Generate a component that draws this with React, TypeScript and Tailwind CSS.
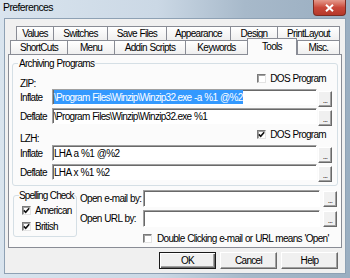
const rowOne = [
  { label: "Values", w: "w-[37px]" },
  { label: "Switches", w: "w-[54px]" },
  { label: "Save Files", w: "w-[59px]" },
  { label: "Appearance", w: "w-[64px]" },
  { label: "Design", w: "w-[47px]" },
  { label: "PrintLayout", w: "w-[63px]" },
];

const rowTwo = [
  { label: "ShortCuts", w: "w-[57px]" },
  { label: "Menu", w: "w-[47px]" },
  { label: "Addin Scripts", w: "w-[71px]" },
  { label: "Keywords", w: "w-[62px]" },
  { label: "Tools", w: "w-[50px]", active: true },
  { label: "Misc.", w: "w-[43px]" },
];

function Tab({ label, w, active, last }: { label: string; w: string; active?: boolean; last?: boolean }) {
  if (active) {
    return (
      <div
        className={`${w} relative z-10 -mb-px flex h-[17px] shrink-0 justify-center border border-b-0 border-[#898c95] bg-[#fbfbfb] pt-[2px] leading-[11px]`}
      >
        {label}
      </div>
    );
  }
  return (
    <div
      className={`${w} flex h-[14px] shrink-0 items-center justify-center whitespace-nowrap border-l border-t border-[#898c95] bg-gradient-to-b from-white to-[#efefef] leading-[11px] ${last ? "border-r" : ""}`}
    >
      {label}
    </div>
  );
}

function Check({ checked }: { checked?: boolean }) {
  return (
    <span className="flex h-[9px] w-[9px] shrink-0 items-center justify-center border border-b-[#e3e3e3] border-l-[#7a7a7a] border-r-[#e3e3e3] border-t-[#7a7a7a] bg-white shadow-[inset_1px_1px_0_#a0a0a0]">
      {checked && (
        <svg width="7" height="7" viewBox="0 0 7 7">
          <path d="M0.8 3.4 L2.7 5.3 L6.2 1.2" fill="none" stroke="#111" strokeWidth="1.6" />
        </svg>
      )}
    </span>
  );
}

function Field({ w, children }: { w: string; children?: React.ReactNode }) {
  return (
    <div
      className={`${w} flex h-full shrink-0 items-center overflow-hidden whitespace-nowrap border border-b-white border-l-[#a0a0a0] border-r-white border-t-[#a0a0a0] bg-white pl-[1px] shadow-[inset_1px_1px_0_#696969]`}
    >
      {children}
    </div>
  );
}

function Dots({ extra = "" }: { extra?: string }) {
  return (
    <div
      className={`flex h-[16px] w-[14px] shrink-0 items-end justify-center border border-b-[#696969] border-l-white border-r-[#696969] border-t-white bg-[#f0f0f0] pb-[2px] text-[8px] leading-[6px] shadow-[inset_-1px_-1px_0_#a0a0a0] ${extra}`}
    >
      ...
    </div>
  );
}

function CmdRow({ label, children }: { label: string; children?: React.ReactNode }) {
  return (
    <div className="flex h-[16px] items-start">
      <div className="w-[39px] shrink-0 self-center pl-[7px] leading-[11px]">{label}</div>
      <Field w="w-[265px]">{children}</Field>
      <Dots extra="ml-[1px] mt-[2px]" />
    </div>
  );
}

export default function App() {
  return (
    <div className="flex h-[278px] w-[350px] flex-col overflow-hidden bg-[linear-gradient(90deg,#d9e4ee_0%,#cbd8e5_45%,#a7b9ca_70%,#9aaec1_100%)] font-['Liberation_Sans',Arial,sans-serif] text-black">
      {/* title bar */}
      <div className="flex h-[18px] shrink-0 items-start justify-between">
        <span className="pl-[3px] pt-[2px] text-[10.5px] leading-[11px] tracking-[-0.6px]">Preferences</span>
        <div className="mr-[4px] flex h-[16px] w-[33px] items-center justify-center rounded-b-[4px] border border-t-0 border-[#7a2b22] bg-gradient-to-b from-[#e4998c] via-[#c9483a] to-[#b5382a]">
          <svg width="9" height="8" viewBox="0 0 9 8">
            <path d="M1 0.8 L8 7.2 M8 0.8 L1 7.2" stroke="#fff" strokeWidth="2" />
          </svg>
        </div>
      </div>

      {/* client area */}
      <div className="mx-[4px] h-[256px] shrink-0 border border-[#8ea1b4] bg-[#f0f0f0] pt-[7px] text-[10px] tracking-[-0.7px] [word-spacing:0.6px]">
        <div className="mx-[3px]">
          <div className="flex pl-[8px]">
            {rowOne.map((t, i) => (
              <Tab key={t.label} label={t.label} w={t.w} last={i === rowOne.length - 1} />
            ))}
          </div>
          <div className="flex h-[14px] items-end pl-[2px]">
            {rowTwo.map((t, i) => (
              <Tab key={t.label} label={t.label} w={t.w} active={t.active} last={i === rowTwo.length - 1} />
            ))}
          </div>

          {/* tab page */}
          <div className="h-[194px] border border-[#898c95] bg-[#fbfbfb] px-[3px] pt-[3px]">
            <fieldset className="min-w-0 rounded-[3px] border border-[#d5dfe5] pb-[5px]">
              <legend className="ml-[5px] whitespace-nowrap px-[1px] leading-[11px]">Archiving Programs</legend>
              <div className="flex h-[20px] items-start">
                <span className="ml-[7px] mt-[9px] leading-[11px]">ZIP:</span>
                <div className="ml-auto mr-[11px] mt-[4px] flex h-[11px] items-center gap-[4px] whitespace-nowrap leading-[11px]">
                  <Check />
                  <span>DOS Program</span>
                </div>
              </div>
              <CmdRow label="Inflate">
                <span className="flex h-full items-center bg-[#3399ff] text-white">
                  \Program Files\Winzip\Winzip32.exe -a %1 @%2
                </span>
              </CmdRow>
              <div className="mt-[3px]">
                <CmdRow label="Deflate">\Program Files\Winzip\Winzip32.exe %1</CmdRow>
              </div>
              <div className="flex h-[21px] items-start">
                <span className="ml-[7px] mt-[9px] leading-[11px]">LZH:</span>
                <div className="ml-auto mr-[11px] mt-[5px] flex h-[11px] items-center gap-[4px] whitespace-nowrap leading-[11px]">
                  <Check checked />
                  <span>DOS Program</span>
                </div>
              </div>
              <CmdRow label="Inflate">LHA a %1 @%2</CmdRow>
              <div className="mt-[3px]">
                <CmdRow label="Deflate">LHA x %1 %2</CmdRow>
              </div>
            </fieldset>

            <div className="mt-[4px] flex items-start">
              <fieldset className="ml-[1px] w-[64px] min-w-0 shrink-0 rounded-[3px] border border-[#d5dfe5] pb-[3px]">
                <legend className="ml-[5px] whitespace-nowrap px-0 leading-[11px] tracking-[-0.9px]">Spelling Check</legend>
                <div className="mt-[2px] flex h-[14px] items-center gap-[4px] pl-[8px]">
                  <Check checked />
                  <span>American</span>
                </div>
                <div className="mt-[2px] flex h-[14px] items-center gap-[4px] pl-[8px]">
                  <Check checked />
                  <span>British</span>
                </div>
              </fieldset>

              <div className="ml-[3px] flex flex-col">
                <div className="flex h-[17px] items-start">
                  <span className="w-[63px] shrink-0 self-center whitespace-nowrap leading-[11px]">Open e-mail by:</span>
                  <Field w="w-[177px]" />
                  <Dots extra="ml-[3px] mt-[1px]" />
                </div>
                <div className="mt-[3px] flex h-[17px] items-start">
                  <span className="w-[63px] shrink-0 self-center whitespace-nowrap leading-[11px]">Open URL by:</span>
                  <Field w="w-[177px]" />
                  <Dots extra="ml-[3px] mt-[1px]" />
                </div>
                <div className="mt-[5px] flex h-[12px] items-center gap-[5px] pl-[63px] leading-[11px]">
                  <Check />
                  <span className="whitespace-nowrap">Double Clicking e-mail or URL means 'Open'</span>
                </div>
              </div>
            </div>
          </div>

          {/* dialog buttons */}
          <div className="mr-[4px] mt-[4px] flex justify-end gap-[4px]">
            <button className="h-[17px] w-[57px] border border-[#1a1a1a] bg-[#f0f0f0] leading-[11px] shadow-[inset_1px_1px_0_#fff,inset_-1px_-1px_0_#696969,inset_-2px_-2px_0_#a0a0a0]">
              OK
            </button>
            <button className="h-[17px] w-[57px] border border-b-[#696969] border-l-white border-r-[#696969] border-t-white bg-[#f0f0f0] leading-[11px] shadow-[inset_-1px_-1px_0_#a0a0a0]">
              Cancel
            </button>
            <button className="h-[17px] w-[57px] border border-b-[#696969] border-l-white border-r-[#696969] border-t-white bg-[#f0f0f0] leading-[11px] shadow-[inset_-1px_-1px_0_#a0a0a0]">
              Help
            </button>
          </div>
        </div>
      </div>
    </div>
  );
}
